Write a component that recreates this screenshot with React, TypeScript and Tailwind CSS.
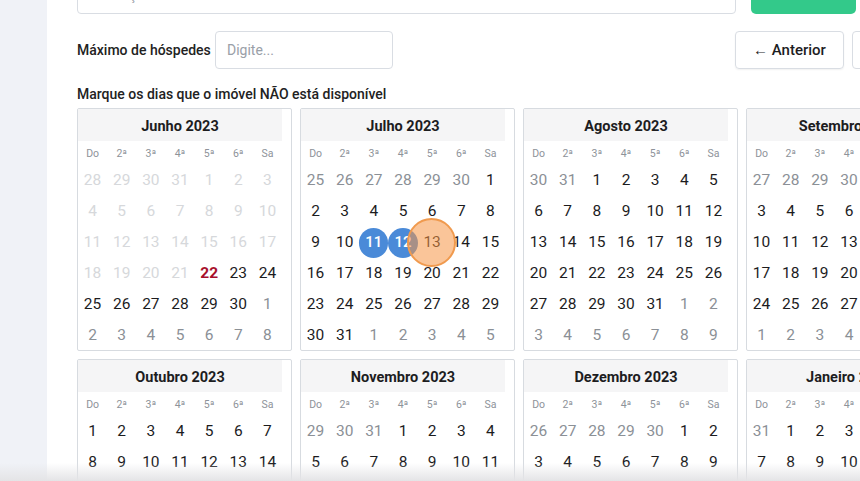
import React from "react";

const MONTHS = [
  "Janeiro", "Fevereiro", "Março", "Abril", "Maio", "Junho",
  "Julho", "Agosto", "Setembro", "Outubro", "Novembro", "Dezembro",
];
const WEEK = ["Do", "2ª", "3ª", "4ª", "5ª", "6ª", "Sa"];

type Cell = { d: number; cur: boolean; date: Date };

function buildCells(y: number, m: number): Cell[] {
  const first = new Date(y, m, 1);
  const start = new Date(y, m, 1 - first.getDay());
  const cells: Cell[] = [];
  for (let i = 0; i < 42; i++) {
    const dt = new Date(start.getFullYear(), start.getMonth(), start.getDate() + i);
    cells.push({ d: dt.getDate(), cur: dt.getMonth() === m, date: dt });
  }
  return cells;
}

const TODAY = new Date(2023, 5, 22);
const SELECTED = [new Date(2023, 6, 11).getTime(), new Date(2023, 6, 12).getTime()];

function MonthCard({ y, m }: { y: number; m: number }) {
  const cells = buildCells(y, m);
  return (
    <div className="w-[215px] h-[243px] shrink-0 border border-[#d7dbe0] rounded-[2px] bg-white overflow-hidden">
      <div className="w-[204px]">
        <div className="h-[32px] pt-[3px] bg-[#f5f5f6] flex items-center justify-center text-[14.5px] font-bold text-[#1d1d1f]">
          {MONTHS[m]} {y}
        </div>
        <div className="grid grid-cols-7 h-[24px] pt-[2px] items-center">
          {WEEK.map((w) => (
            <div key={w} className="text-center text-[10.5px] text-[#8e939a]">
              {w}
            </div>
          ))}
        </div>
        <div className="grid grid-cols-7">
          {cells.map((c, i) => {
            const t = c.date.getTime();
            const isToday = t === TODAY.getTime();
            const disabled = t < TODAY.getTime();
            const sel = SELECTED.includes(t);
            let cls = "text-[#1c1c1e]";
            if (disabled) cls = "text-[#d6d8db]";
            else if (!c.cur) cls = "text-[#8b9096]";
            if (isToday) cls = "text-[#a8102c] font-bold";
            return (
              <div key={i} className="h-[31px] flex items-center justify-center">
                {sel ? (
                  <div className="w-[30px] h-[30px] rounded-full bg-[#4a8ad8] text-white flex items-center justify-center text-[15px] font-medium">
                    {c.d}
                  </div>
                ) : (
                  <span className={`text-[15.5px] ${cls}`}>{c.d}</span>
                )}
              </div>
            );
          })}
        </div>
      </div>
    </div>
  );
}

export default function App() {
  const months: [number, number][] = [
    [2023, 5], [2023, 6], [2023, 7], [2023, 8],
    [2023, 9], [2023, 10], [2023, 11], [2024, 0],
  ];
  return (
    <div
      className="relative w-[860px] h-[481px] overflow-hidden flex bg-white"
      style={{ fontFamily: "Roboto, 'Liberation Sans', sans-serif" }}
    >
      <div className="w-[47px] shrink-0 bg-[#f0f2f7]" />
      <div className="flex-1 pl-[30px] overflow-hidden">
        <div className="flex items-end mt-[-24px] gap-[15px]">
          <div className="w-[659px] h-[38px] shrink-0 border border-[#d9dde3] rounded-[4px] flex items-center px-[12px] text-[14px] text-[#9aa0a8]">
            Descrição das tarifas
          </div>
          <div className="w-[105px] h-[38px] shrink-0 rounded-[5px] bg-[#33c98a]" />
        </div>
        <div className="flex items-center mt-[17px] h-[38px]">
          <div className="w-[138px] shrink-0 text-[14px] font-medium text-[#222]">Máximo de hóspedes</div>
          <div className="w-[178px] h-[38px] shrink-0 border border-[#d9dde3] rounded-[4px] flex items-center px-[11px] text-[14px] text-[#9aa0a8]">
            Digite...
          </div>
          <div className="w-[342px] shrink-0" />
          <div className="w-[109px] h-[38px] shrink-0 border border-[#d9dde3] rounded-[4px] shadow-[0_1px_2px_rgba(0,0,0,0.06)] flex items-center justify-center text-[15px] font-medium text-[#1d1d1f]">
            ← Anterior
          </div>
          <div className="w-[60px] h-[38px] shrink-0 ml-[8px] border border-[#d9dde3] rounded-[4px]" />
        </div>
        <div className="mt-[15px] h-[20px] flex items-center text-[14px] font-medium text-[#222]">
          Marque os dias que o imóvel NÃO está disponível
        </div>
        <div className="mt-[4px] grid grid-cols-[repeat(4,215px)] gap-[8px] w-[900px]">
          {months.map(([y, m]) => (
            <MonthCard key={`${y}-${m}`} y={y} m={m} />
          ))}
        </div>
      </div>
      {/* click highlight */}
      <div className="absolute left-[407px] top-[218px] w-[49px] h-[49px] rounded-full border-2 border-[#f09a4e] bg-[rgba(245,150,70,0.55)]" />
      {/* bottom fade */}
      <div className="absolute left-0 right-0 bottom-0 h-[18px] bg-gradient-to-b from-[rgba(235,235,235,0)] to-[rgba(228,228,230,1)]" />
    </div>
  );
}
